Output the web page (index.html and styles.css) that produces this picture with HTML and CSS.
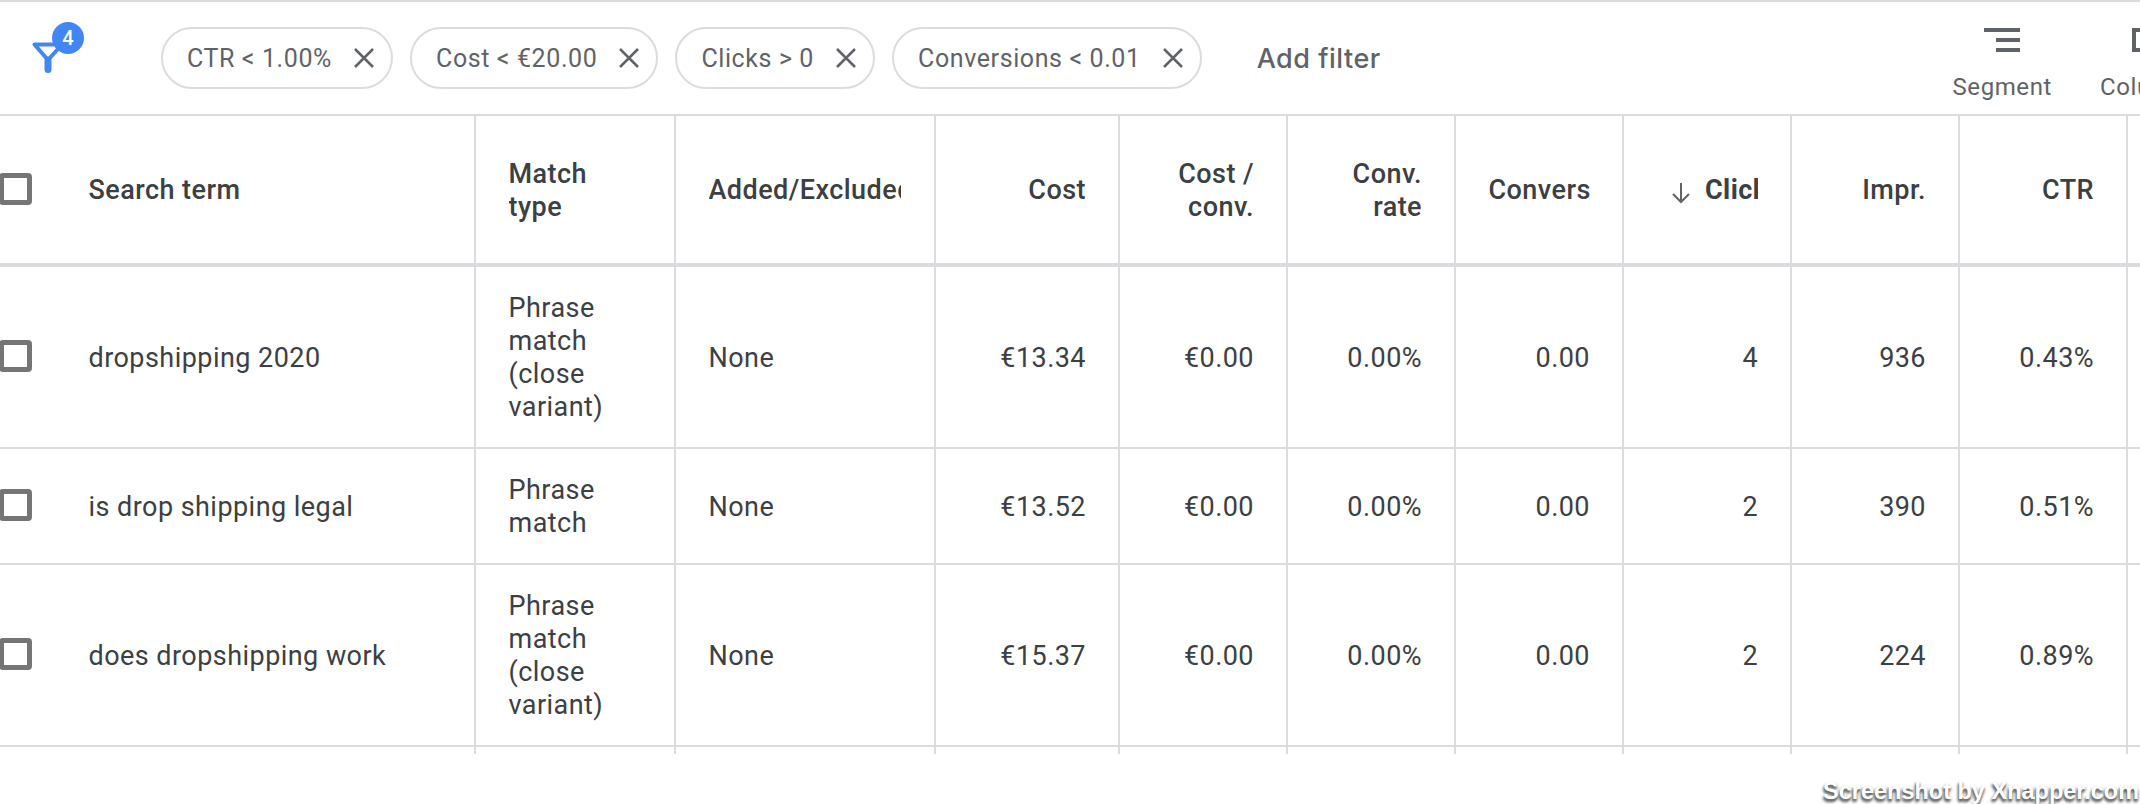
FILE: index.html
```html
<!DOCTYPE html>
<html lang="en">
<head>
<meta charset="utf-8">
<title>Search terms</title>
<link rel="stylesheet" href="styles.css">
</head>
<body>
<div class="page">
  <header class="toolbar">
    <div class="filter-icon">
      <svg class="funnel" width="36" height="36" viewBox="0 0 36 36"><path d="M4.500 4.500H32L18 20Z" fill="none" stroke="#4285f4" stroke-width="4" stroke-linejoin="round"/><path d="M18 20V29.500" stroke="#4285f4" stroke-width="7" stroke-linecap="round"/></svg>
      <span class="badge">4</span>
    </div>
    <div class="chips">
      <div class="chip"><span>CTR &lt; 1.00%</span><svg class="x" viewBox="0 0 22 22"><path d="M2 2L20 20M20 2L2 20"/></svg></div>
      <div class="chip"><span>Cost &lt; €20.00</span><svg class="x" viewBox="0 0 22 22"><path d="M2 2L20 20M20 2L2 20"/></svg></div>
      <div class="chip"><span>Clicks &gt; 0</span><svg class="x" viewBox="0 0 22 22"><path d="M2 2L20 20M20 2L2 20"/></svg></div>
      <div class="chip"><span>Conversions &lt; 0.01</span><svg class="x" viewBox="0 0 22 22"><path d="M2 2L20 20M20 2L2 20"/></svg></div>
    </div>
    <div class="add-filter">Add filter</div>
    <div class="tools">
      <div class="tool tool-segment">
        <svg width="36" height="24" viewBox="0 0 36 24"><path d="M0 2H36M12 12H36M12 22H36" stroke="#5f6368" stroke-width="4"/></svg>
        <span>Segment</span>
      </div>
      <div class="tool tool-columns">
        <svg width="36" height="24" viewBox="0 0 36 24"><path d="M2 0V24M0 2H36M0 22H36" stroke="#5f6368" stroke-width="4" fill="none"/></svg>
        <span>Columns</span>
      </div>
    </div>
  </header>
  <table class="grid">
    <colgroup>
      <col class="c-term"><col class="c-match"><col class="c-added"><col class="c-cost">
      <col class="c-num"><col class="c-num"><col class="c-num"><col class="c-num"><col class="c-num"><col class="c-num"><col class="c-rest">
    </colgroup>
    <thead>
      <tr>
        <th class="term"><span class="check"></span>Search term</th>
        <th><div class="clip">Match<br>type</div></th>
        <th><div class="clip nowrap">Added/Excluded</div></th>
        <th class="r"><div class="clip">Cost</div></th>
        <th class="r"><div class="clip">Cost /<br>conv.</div></th>
        <th class="r"><div class="clip">Conv.<br>rate</div></th>
        <th class="r"><div class="clip nowrap">Conversions</div></th>
        <th class="r sorted"><svg class="arrow" width="20" height="22" viewBox="0 0 20 22"><path d="M10 1V20M2 12L10 20L18 12" fill="none" stroke="#5f6368" stroke-width="2"/></svg><div class="clip nowrap sort-label">Clicks</div></th>
        <th class="r"><div class="clip">Impr.</div></th>
        <th class="r"><div class="clip">CTR</div></th>
        <th></th>
      </tr>
    </thead>
    <tbody>
      <tr class="row-a">
        <td class="term"><span class="check"></span>dropshipping 2020</td>
        <td>Phrase match (close variant)</td><td>None</td>
        <td class="r">€13.34</td><td class="r">€0.00</td><td class="r">0.00%</td><td class="r">0.00</td><td class="r">4</td><td class="r">936</td><td class="r">0.43%</td><td></td>
      </tr>
      <tr class="row-b">
        <td class="term"><span class="check"></span>is drop shipping legal</td>
        <td>Phrase match</td><td>None</td>
        <td class="r">€13.52</td><td class="r">€0.00</td><td class="r">0.00%</td><td class="r">0.00</td><td class="r">2</td><td class="r">390</td><td class="r">0.51%</td><td></td>
      </tr>
      <tr class="row-a">
        <td class="term"><span class="check"></span>does dropshipping work</td>
        <td>Phrase match (close variant)</td><td>None</td>
        <td class="r">€15.37</td><td class="r">€0.00</td><td class="r">0.00%</td><td class="r">0.00</td><td class="r">2</td><td class="r">224</td><td class="r">0.89%</td><td></td>
      </tr>
      <tr class="stub"><td></td><td></td><td></td><td></td><td></td><td></td><td></td><td></td><td></td><td></td><td></td></tr>
    </tbody>
  </table>
  <div class="watermark">Screenshot by Xnapper.com</div>
</div>
</body>
</html>
```
FILE: styles.css
```css
* { box-sizing: border-box; }
html, body { margin: 0; height: 100%; background: #fff; overflow: hidden; }
body { font-family: Roboto, "Liberation Sans", sans-serif; color: #3c4043; }
.page { position: relative; width: 2140px; height: 804px; overflow: hidden; border-top: 2px solid #dadce0; }

.toolbar { display: flex; align-items: flex-start; height: 112px; }
.filter-icon { position: relative; width: 161px; flex: none; }
.funnel { position: absolute; left: 30px; top: 38px; }
.badge { position: absolute; left: 52px; top: 20px; width: 32px; height: 32px; border-radius: 50%; background: #4285f4; color: #fff; font-size: 20px; font-weight: 500; display: flex; align-items: center; justify-content: center; }

.chips { display: flex; gap: 17px; margin-top: 25px; flex: none; }
.chip { display: flex; align-items: center; height: 62px; padding: 0 16px 0 24px; border: 2px solid #dadce0; border-radius: 31px; font-size: 25px; letter-spacing: 0.6px; color: #5f6368; white-space: nowrap; }
.x { width: 22px; height: 22px; margin-left: 21px; flex: none; }
.x path { stroke: #5f6368; stroke-width: 2.500; fill: none; }
.add-filter { margin: 40px 0 0 55px; font-size: 27px; font-weight: 500; letter-spacing: 0.5px; color: #5f6368; font-family: Inter, Roboto, sans-serif; }

.tools { display: flex; margin-left: auto; gap: 48px; width: 188px; flex: none; margin-top: 26px; overflow: hidden; }
.tool { display: flex; flex-direction: column; align-items: flex-end; flex: none; font-size: 24px; letter-spacing: 0.6px; color: #5f6368; gap: 21px; }
.tool-segment { width: 100px; }
.tool-segment svg { margin-right: 32px; }
.tool-columns { align-items: flex-start; }
.tool-columns svg { margin-left: 32px; }

.grid { table-layout: fixed; width: 2248px; border-collapse: separate; border-spacing: 0; border-top: 2px solid #dadce0; font-size: 27px; letter-spacing: 0.45px; line-height: 33px; }
.c-term { width: 476px; }
.c-match { width: 200px; }
.c-added { width: 260px; }
.c-cost { width: 184px; }
.c-num { width: 168px; }
.c-rest { width: 120px; }
th, td { padding: 2px 33px 0 32.500px; border-right: 2px solid #dadce0; border-bottom: 2px solid #dadce0; text-align: left; vertical-align: middle; font-weight: 400; }
th { height: 151px; font-weight: 500; border-bottom-width: 4px; }
.row-a td { height: 182px; }
.row-b td { height: 116px; }
.stub td { height: 7px; border-bottom: 0; padding: 0; }
td.term, th.term { position: relative; padding-left: 88.500px; }
th.r, td.r { text-align: right; padding-right: 32px; }
.clip { overflow: hidden; }
.nowrap { white-space: nowrap; }
.sorted { position: relative; font-weight: 700; }
.sort-label { width: 53px; margin-left: auto; text-align: left; }
.arrow { position: absolute; left: 47px; top: 66px; }
.check { position: absolute; left: -1px; top: 50%; width: 33px; height: 32px; margin-top: -17px; border: 5px solid #757575; border-radius: 4px; }
.watermark { position: absolute; left: 1823px; top: 776px; font-family: "Liberation Sans", Arial, sans-serif; font-size: 23.500px; font-weight: 700; color: #fff; white-space: nowrap; text-shadow: 0 2px 3px #555, -1px 3px 3px #777; }
```
